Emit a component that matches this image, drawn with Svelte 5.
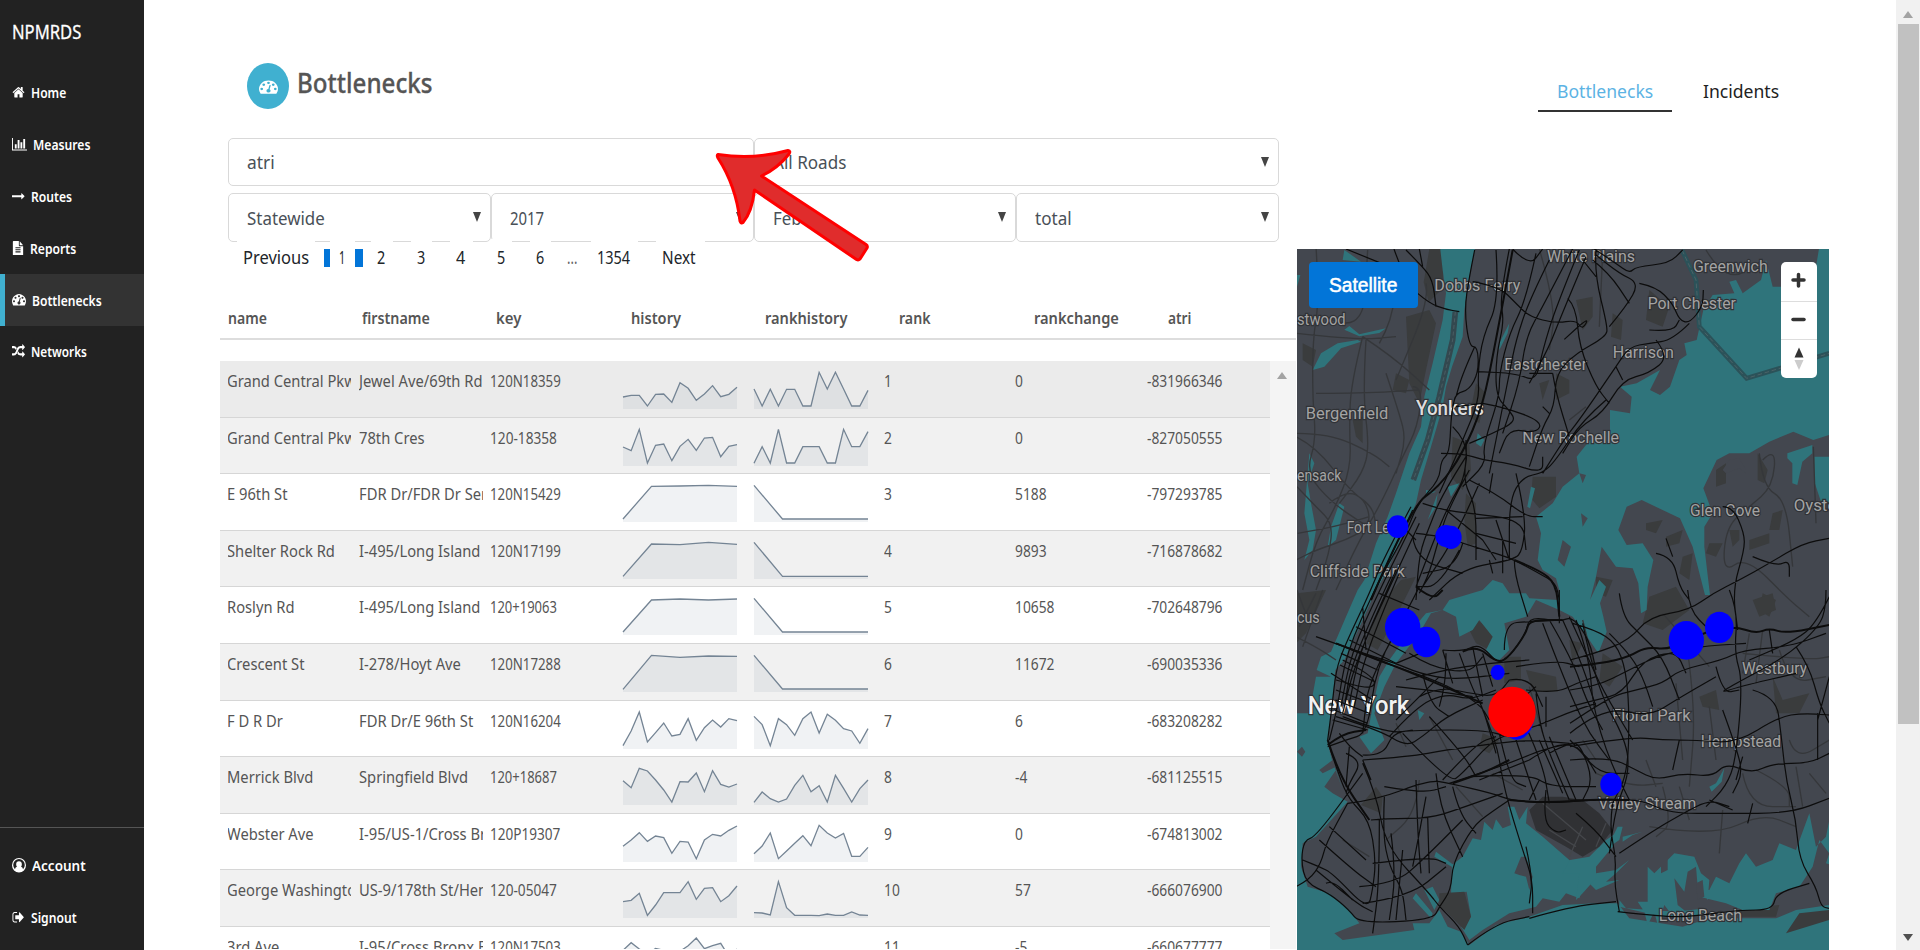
<script>
  const icons = {
    home: 'M1472 992v480q0 26-19 45t-45 19h-384v-384h-256v384h-384q-26 0-45-19t-19-45v-480q0-1 .5-3t.5-3l575-474 575 474q1 2 1 6zm223-69l-62 74q-8 9-21 11h-3q-13 0-21-7l-692-577-692 577q-12 8-24 7-13-2-21-11l-62-74q-8-10-7-23.5t11-21.5l719-599q32-26 76-26t76 26l244 204v-195q0-14 9-23t23-9h192q14 0 23 9t9 23v408l219 182q10 8 11 21.5t-7 23.5z',
    chart: 'M640 896v512h-256v-512h256zm384-512v1024h-256v-1024h256zm1024 1152v128h-2048v-1536h128v1408h1920zm-640-896v768h-256v-768h256zm384-384v1152h-256v-1152h256z',
    arrow: 'M1728 893q0 14-10 24l-384 354q-16 14-35 6-19-9-19-29v-224h-1248q-14 0-23-9t-9-23v-192q0-14 9-23t23-9h1248v-224q0-21 19-29t35 5l384 350q10 10 10 23z',
    file: 'M1596 476q14 14 28 36h-472v-472q22 14 36 28zm-476 164h544v1056q0 40-28 68t-68 28h-1344q-40 0-68-28t-28-68v-1600q0-40 28-68t68-28h800v544q0 40 28 68t68 28zm160 736v-64q0-14-9-23t-23-9h-704q-14 0-23 9t-9 23v64q0 14 9 23t23 9h704q14 0 23-9t9-23zm0-256v-64q0-14-9-23t-23-9h-704q-14 0-23 9t-9 23v64q0 14 9 23t23 9h704q14 0 23-9t9-23zm0-256v-64q0-14-9-23t-23-9h-704q-14 0-23 9t-9 23v64q0 14 9 23t23 9h704q14 0 23-9t9-23z',
    gauge: 'M384 1152q0-53-37.5-90.5t-90.5-37.5-90.5 37.5-37.5 90.5 37.5 90.5 90.5 37.5 90.5-37.5 37.5-90.5zm192-448q0-53-37.5-90.5t-90.5-37.5-90.5 37.5-37.5 90.5 37.5 90.5 90.5 37.5 90.5-37.5 37.5-90.5zm428 481l101-382q6-26-7.5-48.5t-38.5-29.5-48 6.5-30 39.5l-101 382q-60 5-107 43.5t-63 98.5q-20 77 20 146t117 89 146-20 89-117q16-60-6-117t-72-91zm660-33q0-53-37.5-90.5t-90.5-37.5-90.5 37.5-37.5 90.5 37.5 90.5 90.5 37.5 90.5-37.5 37.5-90.5zm-640-640q0-53-37.5-90.5t-90.5-37.5-90.5 37.5-37.5 90.5 37.5 90.5 90.5 37.5 90.5-37.5 37.5-90.5zm448 192q0-53-37.5-90.5t-90.5-37.5-90.5 37.5-37.5 90.5 37.5 90.5 90.5 37.5 90.5-37.5 37.5-90.5zm320 448q0 261-141 483-19 29-54 29h-1402q-35 0-54-29-141-221-141-483 0-182 71-348t191-286 286-191 348-71 348 71 286 191 191 286 71 348z',
    random: 'M666 481q-60 92-137 273-22-45-37-72.5t-40.5-63.5-51-56.5-63-35-81.5-14.5h-224q-14 0-23-9t-9-23v-192q0-14 9-23t23-9h224q250 0 410 225zm1126 799q0 14-9 23l-320 320q-9 9-23 9-13 0-22.5-9.5t-9.5-22.5v-192q-32 0-85 .5t-81 1-73-1-71-5-64-10.5-63-18.5-58-28.5-59-40-55-53.5-56-69.5q59-93 136-273 22 45 37 72.5t40.5 63.5 51 56.5 63 35 81.5 14.5h256v-192q0-14 9-23t23-9q12 0 24 10l319 319q9 9 9 23zm0-896q0 14-9 23l-320 320q-9 9-23 9-13 0-22.5-9.5t-9.5-22.5v-192h-256q-48 0-87 15t-69 45-51 61.5-45 77.5q-32 62-78 171-29 66-49.5 111t-54 105-64 100-74 83-90 68.5-106.5 42-128 16.5h-224q-14 0-23-9t-9-23v-192q0-14 9-23t23-9h224q48 0 87-15t69-45 51-61.5 45-77.5q32-62 78-171 29-66 49.5-111t54-105 64-100 74-83 90-68.5 106.5-42 128-16.5h256v-192q0-14 9-23t23-9q12 0 24 10l319 319q9 9 9 23z',
    user: 'M896 0a896 896 0 1 0 0 1792a896 896 0 1 0 0-1792zM1420 1400q-60-270-260-320q100-110 100-300q0-370-364-370t-364 370q0 190 100 300q-200 50-260 320a740 740 0 1 1 1048 0z',
    signout: 'M704 1440q0 4 1 20t.5 26.5-3 23.5-10 19.5-20.5 6.5h-320q-119 0-203.5-84.5t-84.5-203.5v-704q0-119 84.5-203.5t203.5-84.5h320q13 0 22.5 9.5t9.5 22.5q0 4 1 20t.5 26.5-3 23.5-10 19.5-20.5 6.5h-320q-66 0-113 47t-47 113v704q0 66 47 113t113 47h312l11.5 1 11.5 3 8 5.5 7 9 2 13.5zm928-544q0 26-19 45l-544 544q-19 19-45 19t-45-19-19-45v-288h-448q-26 0-45-19t-19-45v-384q0-26 19-45t45-19h448v-288q0-26 19-45t45-19 45 19l544 544q19 19 19 45z'
  };

  // Scales a label horizontally so that it takes the given width.
  function fit(node, width) {
    node.style.transform = `scaleX(${width / node.offsetWidth})`;
  }

  const nav = [
    { t: 'Home', i: 'home', w: 35, iw: 13 },
    { t: 'Measures', i: 'chart', w: 57, iw: 15, vb: 2048 },
    { t: 'Routes', i: 'arrow', w: 41, iw: 13 },
    { t: 'Reports', i: 'file', w: 46, iw: 12 },
    { t: 'Bottlenecks', i: 'gauge', w: 70, iw: 14 , active: true },
    { t: 'Networks', i: 'random', w: 56, iw: 13 }
  ];
  const foot = [
    { t: 'Account', i: 'user', w: 54, iw: 14 },
    { t: 'Signout', i: 'signout', w: 46, iw: 13 }
  ];

  const pages = [
    ['Previous', 78, 66], ['1', 20, 6], ['2', 22, 8], ['3', 21, 8], ['4', 23, 9],
    ['5', 21, 8], ['6', 21, 8], ['...', 22, 10], ['1354', 47, 33], ['Next', 49, 34]
  ];

  const heads = [
    ['name', 39], ['firstname', 68], ['key', 25], ['history', 50],
    ['rankhistory', 82], ['rank', 32], ['rankchange', 85], ['atri', 23]
  ];

  // Sparkline values are depths below the row's top edge, in thirds of a pixel.
  const drop = (top, low, first) => [first - top, low - top, low - top, low - top, low - top];
  const off = (top, v) => v.map((y) => y - top);
  const rows = [
    { n: 'Grand Central Pkwy', f: 'Jewel Ave/69th Rd', k: '120N18359', r: 1, c: 0, a: -831966346,
      h: off(63, [171,166,166,198,163,162,187,128,145,181,162,137,170,163,142]), g: off(63, [147,198,148,198,148,148,198,198,97,147,97,147,198,198,151]) },
    { n: 'Grand Central Pkwy', f: '78th Cres', k: '120-18358', r: 2, c: 0, a: -827050555,
      h: off(234, [321,332,268,369,316,312,362,319,298,331,294,292,350,319,314]), g: off(234, [370,320,369,268,369,369,320,320,320,369,369,268,320,320,275]) },
    { n: 'E 96th St', f: 'FDR Dr/FDR Dr Service Rd', k: '120N15429', r: 3, c: 5188, a: -797293785,
      h: off(403, [538,440,439,437,440]), g: drop(403, 538, 437) },
    { n: 'Shelter Rock Rd', f: 'I-495/Long Island Expy', k: '120N17199', r: 4, c: 9893, a: -716878682,
      h: off(574, [710,613,615,608,614]), g: drop(574, 710, 608) },
    { n: 'Roslyn Rd', f: 'I-495/Long Island Expy', k: '120+19063', r: 5, c: 10658, a: -702648796,
      h: off(743, [878,782,779,782,779]), g: drop(743, 878, 777) },
    { n: 'Crescent St', f: 'I-278/Hoyt Ave', k: '120N17288', r: 6, c: 11672, a: -690035336,
      h: off(14, [150,48,54,50,51]), g: drop(14, 149, 48) },
    { n: 'F D R Dr', f: 'FDR Dr/E 96th St', k: '120N16204', r: 7, c: 6, a: -683208282,
      h: off(183, [317,273,216,306,278,249,288,283,236,301,263,240,261,236,242]), g: off(183, [229,254,317,236,254,286,236,216,279,223,241,266,273,310,266]) },
    { n: 'Merrick Blvd', f: 'Springfield Blvd', k: '120+18687', r: 8, c: -4, a: -681125515,
      h: off(353, [424,445,387,395,422,452,488,427,428,401,457,394,435,443,434]), g: off(353, [489,458,478,488,479,438,408,457,439,488,408,447,488,448,422]) },
    { n: 'Webster Ave', f: 'I-95/US-1/Cross Bronx', k: '120P19307', r: 9, c: 0, a: -674813002,
      h: off(522, [619,600,578,604,588,593,640,604,606,656,600,583,588,571,558]), g: off(522, [641,618,579,656,633,610,587,617,556,579,594,580,649,649,622]) },
    { n: 'George Washington', f: 'US-9/178th St/Henry', k: '120-05047', r: 10, c: 57, a: -666076900,
      h: off(692, [787,783,762,828,797,760,760,760,727,780,747,745,787,769,740]), g: off(692, [820,821,827,727,805,828,828,828,829,824,828,828,818,827,828]) },
    { n: '3rd Ave', f: 'I-95/Cross Bronx Expy', k: '120N17503', r: 11, c: -5, a: -660677777,
      h: off(862, [932,909,928,945,926,932,950,935,918,895,927,918,911,950,928]), g: off(862, [995,995,995,995,995]) }
  ];
  const line = (v) => v.map((y, i) => `${(i * 114) / (v.length - 1)},${y / 3}`).join(' ');

  // Rounds the corners of polylines written as "Mx yLx y..." by curving through segment midpoints.
  function smooth(d) {
    return d.split('M').filter((s) => s.trim()).map((s) => {
      const n = s.match(/-?[\d.]+/g).map(Number);
      const p = [];
      for (let i = 0; i + 1 < n.length; i += 2) p.push([n[i], n[i + 1]]);
      let out = `M${p[0]}`;
      for (let i = 1; i < p.length - 1; i++) {
        const m = [(p[i][0] + p[i + 1][0]) / 2, (p[i][1] + p[i + 1][1]) / 2];
        out += `Q${p[i]} ${m}`;
      }
      return out + `L${p[p.length - 1]}`;
    }).join('');
  }

  const bronx = 'M294 27L330 130L400 190L450 208L490 215M330 30L380 80L410 120L420 200M370 27L380 80M150 27L330 100M536 30L520 110L505 210L520 320L545 320L548 395L520 450L480 460L470 500L465 540L460 640L435 660L430 720L365 790L330 880L260 1000L225 1080M536 320L500 400L480 470M600 30L610 180L560 290L545 400L550 480L500 600L480 650L430 760M640 27L610 180L625 240L600 350L600 470L640 510L660 545L590 580L520 610M510 600L515 700L460 790L410 910L360 1040M650 27L700 80L740 27M720 40L690 180L640 280L610 400L610 470L560 620L570 670L500 740M760 60L700 180L660 300L640 400L620 500L580 700M830 27L740 200L690 290L670 430L620 580M850 30L780 200L740 330L720 425L660 400L545 395M870 50L790 240L760 320L700 430M860 60L900 110M530 125L610 140L660 190L700 230L780 250L840 240L860 270L880 230L805 298M815 175L840 200L850 320L900 440L940 490M930 480L860 540L780 660L740 700L680 710L640 780L640 960M900 27L895 100L935 260L930 290L840 340L780 400L775 500L740 560L700 680M940 260L990 200L1030 130L970 100L900 45M895 27L960 70L1000 100L1020 80L1120 70L1160 30M890 60L940 100L1000 190M1030 130L1080 140L1130 190L1150 240L1180 250L1220 200L1222 150M1060 270L1130 275L1150 240M1180 250L1130 300L1060 310L1000 320L960 380L850 540L810 590L740 700M1080 300L1120 350L1060 400L980 420L920 520L850 560L800 640M960 380L980 420M560 490L620 500L740 545L720 580L640 565L610 640M480 500L560 490M770 400L780 460L820 590M770 400L700 400M470 560L520 610L500 720L540 800L540 960M435 640L500 640L560 660L640 670L740 700L740 650M520 720L600 760L690 830L740 830M380 790L440 810L520 820L680 840L690 930M510 650L440 760L400 860L370 940L360 1080M520 690L460 800L430 890L400 1000L370 1060M550 730L480 890L380 1040M540 835L680 830M540 880L660 910M660 700L690 830L680 930L655 960L500 985L400 1080M360 880L450 890L500 910L600 940L655 960L730 1000L780 1030L790 1080M500 910L480 980L380 1000M655 960L655 1000L695 1130M560 900L600 960M450 810L560 900M600 840L640 960M580 960L590 1000M620 900L620 1000M330 870L360 900M350 890L360 960L500 1000M490 930L430 1040L360 1040M590 700L580 760M740 500L760 520';
  const manhattan = 'M345 800L260 960L225 1050L145 1220L120 1290L108 1400L95 1500M350 810L240 1040L150 1240L125 1400L100 1500M360 830L250 1050L165 1240L135 1400M370 850L300 1000L180 1260L140 1420M300 990L260 1080L190 1240L160 1390M310 1000L210 1230L175 1400M370 1040L340 1100L240 1280L215 1480L150 1500L95 1520M330 1130L220 1300L200 1480M285 1010L170 1250L145 1400M140 1260L240 1310L230 1350L120 1320M135 1240L245 1290M132 1275L236 1325M120 1350L225 1390M118 1380L220 1420M115 1410L215 1450M110 1440L215 1470M160 1200L300 1270M180 1160L330 1240M105 1300L230 1380M200 1100L210 1230M250 1060L370 1110M130 1480L160 1520L200 1550';
  const queens = 'M120 1210L240 1260L330 1290L440 1330L550 1390L580 1440M60 1190L200 1240L300 1270L370 1300L470 1320L640 1300M440 1230L500 1235L540 1215L570 1230L605 1270L640 1250L690 1180L700 1130L790 1145L830 1130L880 1200L900 1290M300 1270L420 1220M330 1320L440 1290L580 1270L700 1260M370 1370L430 1340L520 1360L600 1370L640 1320M140 1430L270 1480L360 1470L560 1470L640 1490M280 1490L360 1400L450 1360L520 1380L600 1350M120 1430L250 1470L330 1520L380 1490L450 1430L560 1380M200 1545L260 1548L290 1480L350 1470M200 1560L340 1550L450 1530L600 1510L700 1500L820 1510M320 1480L460 1630L500 1600L580 1510L640 1480L720 1460L810 1420L900 1390M460 1630L520 1610L640 1570L760 1520L900 1500M100 1520L130 1610L160 1680L220 1740L240 1860L230 1950L215 2010L110 1900L70 1880L20 1860M155 1690L240 1680L400 1620L460 1630L590 1660L640 1680L740 1690L900 1680M640 1680L580 1720L530 1760L470 1870L465 1950L430 2000L410 2040L190 2050L160 2010L100 1960L30 1930L15 1860L25 1800L60 1790L200 1600M0 1940L40 1920L75 1870L90 1810L155 1690M225 1740L270 1735L400 1735L480 1710L620 1660M70 1800L170 1890L240 1940M100 1760L210 1860M60 1890L180 1990L230 2015M90 1930L110 1920L170 1980M230 1870L400 1850L450 1870M190 1940L300 1930L380 1860L500 1740M200 1990L340 1970L450 1880M265 1670L260 1780L280 1880L320 1950L330 2040M200 1570L240 1660L270 1820L400 1960L430 2000L490 2060L515 2115M250 1740L250 1930L230 2080M285 1780L300 1900L280 2040M320 1830L300 2040M360 1620L365 1780L375 1900M390 1670L370 1780L350 1880M395 1730L400 1900M420 1600L430 1700L500 1850M470 1640L490 1720L540 1780M150 1540L200 1560L160 1630L150 1660M160 1520L150 1640M200 1560L225 1620M265 1640L380 1660L450 1640M400 1430L500 1540L540 1610M440 1230L470 1330M560 1410L600 1500L620 1620L640 1700L680 1830L710 1920L710 2020M450 1240L450 1320L430 1400M490 1240L530 1350L560 1400L600 1540M530 1220L560 1370M560 1240L590 1340M610 1480L640 1620L690 1640M660 1500L720 1680M690 1460L740 1570L760 1690M730 1500L800 1660M760 1490L840 1680M720 1360L730 1450L760 1540L820 1680M750 1370L750 1460M690 1350L780 1360L840 1330L900 1310M625 1230L625 1150L700 1145L800 1140M790 1050L790 1150M740 1150L790 1280L840 1400L880 1480L940 1560M760 1140L830 1260L870 1380L920 1470M800 1140L850 1250L900 1400M820 1130L870 1240L920 1350L1010 1500M640 1320L700 1310L740 1400M830 1150L900 1170L960 1210L990 1290L1000 1420L995 1600L950 1690M660 1280L780 1260L850 1280M440 1620L540 1510L600 1490M430 1310L340 1400L300 1440M520 1610L700 1600L760 1640L900 1640M550 1620L700 1560M760 1540L830 1500L860 1530L890 1620L860 1680M700 1560L760 1520L830 1510L880 1560M730 1620L700 1680M380 1300L400 1390L460 1430M590 1450L720 1340M340 1240L400 1280L520 1300L560 1250M300 1340L400 1350L530 1370';
  const island = 'M822 1260L900 1240L1000 1200L1060 1130L1180 1110L1250 1060L1330 1020L1420 970L1520 910L1600 895M970 1060L980 1130L1030 1180L1100 1250L1150 1380M940 1180L1000 1240L1040 1310L1070 1400M1175 1050L1180 1110L1240 1170M1300 1050L1325 1110L1315 1240L1340 1320L1320 1560L1290 1640L1230 1700M1080 940L1130 950L1150 1040L1180 1080M1110 895L1130 950M1280 800L1310 800L1345 880L1345 930L1310 1050L1325 1170M1370 950L1440 980L1480 960L1480 1010M1590 1050L1590 1100L1570 1160L1470 1250L1320 1330L1270 1360L1330 1340L1500 1300M1600 1070L1560 1150L1500 1200L1360 1260M822 1350L900 1340L1000 1290L1080 1250L1200 1220L1350 1210M822 1400L900 1380L980 1360L1040 1260L1140 1230L1170 1300M822 1450L940 1370L1020 1350L1100 1330L1150 1290L1280 1260L1340 1230L1480 1220L1590 1180M840 1140L880 1250L890 1400L940 1560L1000 1680M860 1150L900 1340L990 1500L1000 1600L960 1700L940 1840M822 1480L920 1400L1060 1430L1140 1380L1260 1310M822 1520L1000 1490L1100 1500L1200 1500L1320 1510L1450 1430L1520 1420L1600 1425M822 1560L940 1550L1020 1590L1080 1620L1160 1600L1250 1610L1290 1570L1370 1600L1430 1570L1540 1570L1600 1540M1150 1500L1130 1590M1280 1410L1320 1520L1340 1600L1310 1660M1340 1550L1320 1620M1370 1350L1440 1370L1455 1480L1470 1620L1500 1740L1510 1860L1560 1940L1575 2000L1600 2005M1500 1220L1540 1280L1570 1390L1600 1450M1600 1310L1565 1440M1565 1420L1565 1560M822 1680L950 1680L1040 1680L1120 1720L1290 1720L1480 1720L1600 1675M970 1840L1060 1780L1160 1720L1240 1680L1300 1700M950 1690L940 1760L960 1850L955 1930L970 2015M700 2035L822 2000L960 1985M515 2115L600 2050L700 2030M965 2015L1100 2030L1180 2030L1330 2010L1430 2010L1440 1960L1540 1930M1240 1680L1310 1710M1370 1690L1355 1750M1420 1170L1430 1240M840 1720L900 1770L960 1850M690 1820L710 1910L700 1990M860 1540L900 1600L1000 1600M822 1500L870 1550L900 1600M750 1650L740 1740L780 1780L810 1770M1260 1280L1280 1360L1330 1350';
  const trunk = 'M822 1280L920 1270L1000 1250L1050 1220L1120 1230L1240 1170L1320 1160L1380 1180L1420 1165L1470 1180L1600 1155M500 1235L540 1215L605 1270L640 1250L690 1180L700 1140L800 1140M640 1680L740 1690L900 1678L1000 1680M655 960L730 990L780 1030L790 1130M225 1080L345 800L430 740L500 640L560 500L600 300L650 30M120 1210L330 1290L560 1390M95 1500L130 1610L220 1740M95 1515L140 1480L210 1470M470 1630L560 1600L640 1560M360 1040L410 1080L440 1050';
  const minor = 'M60 20L70 180L50 300L50 480L60 600L30 700L110 790L200 850M90 230L200 290L215 30M200 290L165 430L160 560L165 680L120 800L60 900L20 1050M200 290L290 350L400 450M210 300L200 460L220 620L200 700L130 790M250 310L290 240L300 100M0 280L180 300L300 290M0 580L100 580L230 640L280 680M0 590L60 620L160 750L230 800L240 860M3 740L60 800L110 850L100 940L60 1050M60 460L200 460L370 450M270 400L310 520L330 600L300 700M350 440L380 440L365 560L320 650L250 800L190 900L120 1050M100 790L150 750L210 780L225 860L150 900L60 930L0 960M390 130L400 180L300 420M5 880L120 860L220 830M0 1190L60 1220L120 1260M3 1050L40 1150M60 1060L10 1160M80 1050L20 1220M730 27L780 200L760 330M920 40L910 260M870 500L820 540M1230 30L1290 130L1400 60M1400 660L1440 620L1430 740L1360 800L1290 860L1280 1000L1350 950L1480 1080L1540 1130M1552 620L1560 850M1390 640L1400 740L1470 780L1490 980M1170 1200L1200 1400L1180 1640M1240 1400L1260 1560M1100 1120L1240 1280M900 1600L1000 1640L1100 1630M1340 1600L1360 1700L1500 1700M1380 1590L1480 1640L1480 1700M1500 1580L1520 1700M1060 1760L1250 1790L1400 1720L1500 1760M1100 1640L1130 1750L1080 1790M1150 1640L1180 1740M1280 1710L1270 1840M1540 1600L1590 1660M1050 1560L1080 1640M1340 1240L1540 1260L1600 1250M1360 1180L1340 1300M1400 1170L1380 1330M1450 1230L1480 1330L1590 1310M1480 1500L1500 1560L1600 1500M860 1500L900 1560M1140 1330L1160 1560M370 1620L360 1720L270 1800M480 1640L560 1730M400 1430L470 1560M300 1450L330 1520M140 1800L220 1850M590 1600L680 1650M700 1340L740 1480M860 1140L900 1300';

  const places = [
    ['Dobbs Ferry', 415, 152, 258], ['stwood', 3, 256, 146], ['Bergenfield', 29, 538, 248], ['ensack', 3, 724, 133],
    ['Fort Lee', 152, 878, 150], ['Cliffside Park', 41, 1010, 286], ['Eastchester', 625, 389, 248], ['New Rochelle', 679, 610, 290],
    ['White Plains', 753, 65, 264], ['Greenwich', 1191, 97, 224], ['Port Chester', 1055, 207, 265], ['Harrison', 950, 354, 184],
    ['Glen Cove', 1182, 828, 210], ['Oyster Bay', 1493, 812, 240], ['cus', 3, 1150, 68], ['Westbury', 1338, 1302, 195],
    ['Floral Park', 948, 1443, 236], ['Hempstead', 1214, 1522, 241], ['Valley Stream', 907, 1706, 294], ['Long Beach', 1088, 2042, 250]
  ];

  const dots = [
    [305, 860, 32, 34], [450, 888, 32, 33], [465, 892, 32, 35], [320, 1162, 53, 58], [391, 1206, 42, 46],
    [605, 1297, 21, 23], [662, 1424, 53, 75], [1171, 1201, 53, 58], [1270, 1162, 43, 47], [945, 1633, 32, 35]
  ];
</script>

<div class="page">
  <aside>
    <h1><span class="t" use:fit={69}>NPMRDS</span></h1>
    <nav>
      {#each nav as n}
        <a class:active={n.active} href="#top">
          <svg style:width="{n.iw}px" viewBox="0 0 {n.vb ?? 1792} 1792" preserveAspectRatio="none"><path d={icons[n.i]} /></svg>
          <span class="t" use:fit={n.w}>{n.t}</span>
        </a>
      {/each}
    </nav>
    <nav class="foot">
      {#each foot as n}
        <a href="#top">
          <svg style:width="{n.iw}px" viewBox="0 0 1792 1792" preserveAspectRatio="none"><path fill-rule="evenodd" d={icons[n.i]} /></svg>
          <span class="t" use:fit={n.w}>{n.t}</span>
        </a>
      {/each}
    </nav>
  </aside>

  <main>
    <header>
      <span class="badge"><svg viewBox="0 0 1792 1792" preserveAspectRatio="none"><path d={icons.gauge} /></svg></span>
      <h2><span class="t" use:fit={136}>Bottlenecks</span></h2>
      <div class="tabs">
        <a class="on" href="#top"><span class="t" use:fit={96}>Bottlenecks</span></a>
        <a href="#top"><span class="t" use:fit={76}>Incidents</span></a>
      </div>
    </header>

    <div class="content">
      <section class="left">
        <div class="filters two">
          <div class="select"><span class="t" use:fit={28}>atri</span></div>
          <div class="select"><span class="t" use:fit={73}>All Roads</span><i></i></div>
        </div>
        <div class="filters four">
          <div class="select"><span class="t" use:fit={78}>Statewide</span><i></i></div>
          <div class="select"><span class="t" use:fit={34}>2017</span><i></i></div>
          <div class="select"><span class="t" use:fit={29}>Feb</span><i></i></div>
          <div class="select"><span class="t" use:fit={37}>total</span><i></i></div>
        </div>
        <div class="pager">
          {#each pages as [label, box, w]}
            <span class="pg" class:cur={label === '1'} class:dots={label === '...'}>
              <span class="box" style:width="{box}px"><span class="t" use:fit={w}>{label}</span></span>
            </span>
          {/each}
        </div>

        <div class="thead">
          {#each heads as [h, w]}<div><span class="t" use:fit={w}>{h}</span></div>{/each}
        </div>

        <div class="scroll">
          <div class="rows">
            {#each rows as r}
              <div class="row">
                <div class="c name"><span class="t">{r.n}</span></div>
                <div class="c name"><span class="t">{r.f}</span></div>
                <div class="c"><span class="t" use:fit={r.k.includes('P') ? 70 : r.k.includes('N') ? 71 : 67}>{r.k}</span></div>
                {#each [r.h, r.g] as v}
                  <div class="c"><svg class="spark" viewBox="0 0 114 56">
                    <polygon points="0,48 {line(v)} 114,48" />
                    <polyline points={line(v)} />
                  </svg></div>
                {/each}
                <div class="c"><span class="t">{r.r}</span></div>
                <div class="c"><span class="t">{r.c}</span></div>
                <div class="c"><span class="t">{r.a}</span></div>
              </div>
            {/each}
          </div>
          <div class="track"><b></b></div>
        </div>
      </section>

      <section class="map">
        <svg class="canvas" viewBox="3 27 1596 2103" preserveAspectRatio="none">
          <rect x="0" y="0" width="1700" height="2200" fill="#43474f" />

          <g class="park">
            <path d="M400 27h35l8 60-5 60-40 40-15-60zM330 230l70-20 20 40-30 140-20 100-30-60z M470 590l50 20 5 80-25 60-35-40zM510 760l30 30 0 120-25 10-10-80z M540 430l30 30-20 90-30-20z M840 180l50-10 0 60-30 40zM1060 150l60 50-20 60-50-20z M950 220l30 20-5 60-30-10z M710 710l70 0 0 60-50 35-25-30z M780 400l40 20 0 40-40 20z M730 430l30-10-20 60z M20 310l40 20-10 50-30-20z M170 540l30-10 0 80-20-20z M300 400l40 20-10 40-40-10z" />
            <path d="M255 1090l60-70 45-10-55 110-60 110-35-20z M0 1060l90-10-60 130-30 30z M240 1640l20 30-5 50-60-25z M625 1250l50 0 0 70-50 10z M690 1290l90 20 5 45-75 0z M560 1480l50 20-30 40-30-15z M1060 1070l80-30 40 70-80 60-60-20z M1430 1310l30 70 80-20-30 60-70 0z M1400 1060l40 20-20 50-30-20z M920 1240l60 40-40 60-30-20z M1260 690l30-20 0 60-30 10z M1385 640l30 50-10 40-20-10z M1050 850l50-10-20 40-30-10zM1110 890l50-20-10 40-40 10z M1160 950l30-10-10 80-30-20z M1430 820l30-10-10 60-30 0z M1300 870l30 0 0 30-20 20z M1360 900l60-20 0 30-60 20z M1240 910l40 0-20 40-30-10z M900 1010l50 10-20 50-30-10z M820 1200l40 10-30 60z M1210 1370l50-20 10 60-50-10z M1330 2005l120-10-10 35-110 0z" />
            <path d="M520 1170l25-30 50 40-15 50-40-20z M1370 1080l60-20 10 50-50 20z" />
          </g>

          <g class="bay">
            <path d="M432 20H538L520 110L505 210L500 290L468 380L450 440L440 500L405 620L375 720L360 790L330 860L300 930L270 1000L240 1050L200 1140L145 1260L118 1290L108 1400L95 1510L108 1560L140 1650L120 1590L85 1640L110 1660L155 1685L60 1790L20 1810L15 1880L35 1940L100 1960L160 2010L190 2050L115 2080L140 2100L355 2070L350 2050L400 2050L430 2010L455 2060L495 2075L520 2115L600 2055L700 2030L800 1995L900 1990L965 1990L1000 2035L1160 2060L1240 2035L1440 2035L1500 2010L1600 1995V2140H0V1420L40 1420L60 1310L105 1310L62 1290L75 1250L105 1235L150 1130L185 1050L205 1020L240 910L275 830L300 760L340 640L375 560L385 470L410 370L440 240L450 160L440 90Z" />
            <path d="M1600 20L1570 20L1560 80L1520 120L1470 140L1430 140L1410 60L1395 120L1340 160L1320 120L1300 125L1315 160L1250 165L1222 210L1202 300L1165 310L1172 345L1150 360L1122 440L1092 465L1062 450L1092 390L1022 430L972 440L1007 470L1002 520L942 510L942 570L882 600L842 650L850 700L800 740L770 790L720 830L735 880L725 960L740 990L780 1015L790 1050L785 1080L700 1075L690 1060L640 1060L620 1030L590 1020L560 1050L510 1065L460 1080L440 1110L390 1120L330 1190L280 1260L250 1310L230 1400L215 1480L190 1490L225 1540L265 1500L235 1420L265 1340L300 1270L370 1180L405 1120L440 1110L480 1130L490 1190L530 1170L550 1140L590 1190L570 1230L605 1265L640 1230L625 1150L690 1130L720 1080L790 1110L830 1130L860 1170L907 1240L932 1175L922 1130L912 1090L930 1040L910 1020L882 1080L900 1010L917 920L960 980L1010 985L1027 1030L1035 1120L1052 1110L1055 1040L1072 960L1040 910L992 915L967 870L992 800L1037 780L1152 835L1190 920L1227 1065L1242 1065L1225 920L1225 860L1250 820L1222 745L1262 660L1300 640L1360 640L1420 605L1492 575L1552 600L1600 585Z" />
            <path d="M1474 640l75-25 0 25-30 25-15 70-15-5 0-60-15-15zM1555 650l50 0 0 140-30-5-20-60zM705 740l12 5-15 60-8-5z" />
            <!-- Jamaica Bay -->
            <path d="M468 1875L500 1850L530 1795L555 1800L565 1745L590 1770L600 1738L620 1765L645 1755L635 1700L655 1700L670 1740L695 1700L690 1750L740 1790L820 1860L900 1900L960 1890L1000 1860L960 1900L930 1925L970 1920L900 1950L870 1920L850 1975L810 1960L790 1985L740 1975L720 2000L640 2020L560 2070L520 2100L495 2060L525 2030L512 1955L465 1962Z" />
            <path d="M822 1860L880 1850L930 1800L960 1780L950 1820L900 1880L900 1915L860 1960L840 1980L850 1900L800 1900ZM385 1950L410 1940L430 1980L415 2010Z" />
            <path d="M1055 1880l20 20 40-40 20-20 60 10 20 50 25 20-5 60-30-40-5-60-25 15-10 60-30-40 10 80 50 40-60 0-30-40-20 60-10-40-20 40-10-40-20-30 30 0z M1240 1950l20-40 40 20 30-60 20-30 30 40 50-20 20-50 50 20 40-110 20 100 30-30 20-100 40 60 0 140-60-20 10-30-30-40-20 80-40 60-70 20-20 50-80 0-50-20-80-20 0-20 40 0z M970 1980l20 25 150 10 90-10-10 20-120 5-130-30zM945 1800l20-40 15 0-10 40-30 20zM980 1790l60-15-30 10-30 20z" />
            <path d="M50 390l25-50 50-30 60-10 10 5-60 20-50 55zM160 258l30 25 80-18-20 14-60 10-45-20zM145 30l50 35-55-5zM3 105l10 0-10 35z M40 640l15 30-20 60 10 60 15 80-10 60-25 30 15-60-15-80z M130 790l15 10-25 100-25 20 10-60z M455 740l35-10-25 40zM390 750l30 5-30 10zM410 800l15-40-5 40-25 40z M545 580l20 20-10 20-15-10zM610 310l30-60-5 30-25 50z" />
            <path d="M1240 1640l20-10 25-45-8 40-30 30zM365 1410l20 10-15 20zM420 1835l60 45-5 5-60-35zM360 1960l50 60-5 15-55-60z" />
          </g>

          <g class="land">
            <path d="M3 1535l15-15 10 15-10 15zM70 1590l40-30 10 20-40 20zM855 820l20 15-15 25zM800 900l25 20-20 60-20-20zM850 700l20 5-10 25zM1280 690l20-30 30-5 20 35 0 10-20-15-40 15zM655 1900l20-50 15 0 20 60-10 40-10-40-20-5zM1095 1860l20 0 0 30-20 10zM1200 1930l20-10 5 50-20 10z" />
            <path d="M1470 2080l40-60 90-10v30zM430 1960l75-5 20 75-20 40-50-50-25-20z" fill="#3a3c3d" />
          </g>
          <path d="M700 1710l40-40 60 0 60 10 50 40 40 50-40 50-50 30-50-30-90-50z" fill="#303134" />
          <path d="M740 1690l130 110M760 1770l80 50M820 1850l40-90M900 1820l30-70" class="run" />

          <path d="M478 215L470 300L430 470L395 600L352 720" fill="none" stroke="#33484f" stroke-width="17" />
          <path d="M478 215L470 300L430 470L395 600L352 720" fill="none" stroke="#56666c" stroke-width="2" stroke-dasharray="12 8" />
          <path d="M1158 30L1200 120L1210 260L1352 415L1600 340" class="ferry" />
          <path d="M1158 30L1200 120L1210 260L1352 415L1600 340" class="ferry in" />

          <path class="minor" d={smooth(minor)} />

          <g class="labels">
            {#each places as [name, x, y, w]}
              <text {x} {y} textLength={w} lengthAdjust="spacingAndGlyphs">{name}</text>
            {/each}
            <text class="city" x="360" y="524" textLength="204" lengthAdjust="spacingAndGlyphs">Yonkers</text>
            <text class="metro" x="35" y="1422" textLength="305" lengthAdjust="spacingAndGlyphs">New York</text>
          </g>

          <g class="road">
            {#each [bronx, manhattan, queens, island] as d}<path d={smooth(d)} />{/each}
            <path class="heavy" d={smooth(trunk)} />
          </g>

          {#each dots as [x, y, rx, ry]}<ellipse cx={x} cy={y} {rx} {ry} fill="#00f" />{/each}
          <ellipse cx="648" cy="1416" rx="71" ry="76" fill="red" />
        </svg>
        <button class="sat"><span class="t" use:fit={68}>Satellite</span></button>
        <div class="zoom">
          <div><svg viewBox="0 0 36 38"><path d="M12 18h11M17.500 12.500v11.500" /></svg></div>
          <div><svg viewBox="0 0 36 38"><path d="M12 17.500h11" /></svg></div>
          <div><svg viewBox="0 0 36 38"><path class="n" d="M13.500 17.500L18 7.500L22.500 17.500Z" /><path class="s" d="M13.500 20L18 30L22.500 20Z" /></svg></div>
        </div>
      </section>
    </div>
  </main>

  <div class="bar"><b class="up"></b><div class="thumb"></div><b class="down"></b></div>

  <svg class="pointer" viewBox="710 145 165 125">
    <path d="M718 154.500Q754 160 788 150.500Q791 151 789 154Q778 168 761.500 176L866 244.500Q868 246 867 248L860 259Q858.500 260.500 856.500 259.500L754.500 190Q752 212 743 222.500Q741 224 740 221Q736 186 718 158Q716.500 155 718 154.500Z" />
  </svg>
</div>

<style>
  :global(body) { margin: 0; overflow: hidden; background: #fff; }
  * { box-sizing: border-box; }
  .page { position: relative; display: flex; width: 1920px; height: 950px; overflow: hidden; font-family: 'Noto Sans', sans-serif; color: #555; }
  .t { display: inline-block; white-space: nowrap; transform-origin: 0 50%; }
  a { text-decoration: none; color: inherit; }

  aside { width: 144px; flex: none; background: #222; color: #fff; display: flex; flex-direction: column; }
  h1 { margin: 0; padding-left: 12px; height: 67px; line-height: 63px; font-size: 19.500px; font-weight: 400; -webkit-text-stroke: 0.300px #fff; }
  nav { display: flex; flex-direction: column; }
  nav a { display: flex; align-items: center; gap: 6px; height: 51.800px; padding-left: 12px; padding-bottom: 1px; font-size: 14.500px; font-weight: 600; }
  nav a.active { background: #333; border-left: 5px solid #40b0d0; padding-left: 7px; }
  nav svg { height: 14.500px; flex: none; fill: #fff; }
  nav.foot { margin-top: auto; padding: 12px 0 6px; height: 123px; border-top: 1px solid #555; }

  main { flex: none; width: 1752px; padding: 63px 0 0 76px; }
  header { display: flex; height: 75px; padding-left: 27px; }
  .badge { width: 42px; height: 46px; border-radius: 50%; background: #40b0d0; display: flex; justify-content: center; padding-top: 15px; }
  .badge svg { width: 19px; height: 17px; fill: #fff; }
  h2 { margin: 0 0 0 8px; width: 1241px; font-size: 27px; line-height: 40px; font-weight: 500; -webkit-text-stroke: 0.300px #555; }
  .tabs { display: flex; gap: 12px; font-size: 18.500px; line-height: 28px; color: #222; padding-top: 14px; }
  .tabs a { width: 134px; height: 35px; padding-left: 19px; }
  .tabs .on { color: #5cb3e4; border-bottom: 2px solid #333; }

  .content { display: flex; }
  .left { width: 1077px; flex: none; }
  .filters { display: grid; width: 1051px; margin-left: 8px; font-size: 18px; color: #495057; }
  .two { grid-template-columns: 1fr 1fr; height: 48px; }
  .four { grid-template-columns: repeat(4, 1fr); height: 49px; margin-top: 7px; }
  .select { display: flex; align-items: center; justify-content: space-between; border: 1.500px solid #d9d9d9; border-radius: 5px; background: #fff; padding: 0 9px 0 18px; }
  .select i { border: solid transparent; border-width: 10px 4.500px 0; border-top-color: #444; margin-bottom: 1px; }
  .pager { display: flex; position: relative; margin: -3px 0 0 17px; height: 34px; font-size: 18px; color: #212529; }
  .pg { display: flex; align-items: center; margin-right: 18px; }
  .box { display: block; background: #fff; height: 34px; line-height: 36px; padding-left: 6px; }
  .cur { background: linear-gradient(#0275d8, #0275d8) 0 10px / 100% 18px no-repeat; padding: 0 8px 0 6px; margin: 0 8px 0 -9px; }
  .cur .box { width: 25px !important; padding-left: 9px; }
  .dots { color: #666; margin: 0 2px 0 -2px; }
  .dots .box { background: none; padding-left: 0; }

  .thead { display: flex; width: 1076px; height: 67px; padding: 30px 0 0 7.500px; border-bottom: 2px solid #ddd; font-size: 15.500px; font-weight: 600; line-height: 30px; }
  .thead div { width: 134.400px; flex: none; }
  .scroll { display: flex; height: 588px; margin-top: 21px; overflow: hidden; }
  .rows { width: 1050px; }
  .row { display: flex; height: 56.600px; border-bottom: 1.500px solid #d6d6d6; font-size: 15.500px; line-height: 22px; }
  .row:nth-child(even) { background: #f1f1f1; }
  .row:first-child { background: #ebebeb; }
  .c { width: 123.500px; flex: none; margin-left: 7.750px; overflow: hidden; padding-top: 9px; }
  .c .t { transform: scaleX(0.89); }
  .c.name .t { transform: scaleX(0.95); margin-left: -0.500px; }
  .c:has(.spark) { padding: 0; }
  .spark { display: block; width: 114px; height: 56px; margin-left: 1.500px; overflow: visible; }
  .spark polygon { fill: slategray; opacity: 0.1; }
  .spark polyline { fill: none; stroke: #748494; stroke-width: 1.300; }
  .track { width: 26px; background: #f4f4f4; display: flex; justify-content: center; padding: 11px 2px 0 0; }
  .track b { height: 7px; border: solid transparent; border-width: 0 5.500px 7px; border-bottom-color: #a3a3a3; }

  .map { position: relative; width: 532px; height: 701px; margin-top: 111px; overflow: hidden; }
  .canvas { display: block; width: 532px; height: 701px; }
  .park { fill: #3a3c3d; }
  .bay { fill: #2f747b; }
  .land { fill: #43474f; }
  .run { fill: none; stroke: #44464a; stroke-width: 4; }
  .ferry { fill: none; stroke: #2b5259; stroke-width: 14; }
  .ferry.in { stroke: #4c6267; stroke-width: 3; stroke-dasharray: 14 8; }
  .minor { fill: none; stroke: #35373a; stroke-width: 4; }
  .road { fill: none; stroke: #0c0c0c; stroke-width: 3.600; stroke-linejoin: round; }
  .heavy { stroke-width: 6; }
  .labels { font-family: Roboto, sans-serif; font-size: 50px; fill: #a3a3a3; stroke: #303236; stroke-width: 7; paint-order: stroke; }
  .city { fill: #ddd; font-size: 60px; font-weight: 500; }
  .metro { fill: #f2f2f2; font-size: 79px; font-weight: 500; }
  .sat { position: absolute; left: 12px; top: 13px; width: 109px; height: 46px; padding: 0 0 0 20px; border: 0; border-radius: 4px; background: #0275d8; color: #fff; font: 19.500px 'Liberation Sans', sans-serif; text-align: left; -webkit-text-stroke: 0.500px #fff; }
  .zoom { position: absolute; right: 12px; top: 13px; width: 36px; height: 116px; border-radius: 5px; background: #fff; display: grid; grid-template-rows: repeat(3, 38.700px); }
  .zoom div + div { border-top: 1px solid #ddd; }
  .zoom svg { display: block; width: 36px; height: 38px; fill: none; stroke: #333; stroke-width: 3.500; stroke-linecap: round; }
  .zoom .n { fill: #333; stroke: none; }
  .zoom .s { fill: #ccc; stroke: none; }

  .bar { width: 24px; height: 950px; background: #f1f1f1; display: flex; flex-direction: column; align-items: center; }
  .bar b { border: solid transparent; border-width: 0 5.500px 7px; margin: 11px 0 6px; }
  .bar .up { border-bottom-color: #a3a3a3; }
  .bar .thumb { width: 21px; height: 700px; background: #c1c1c1; }
  .bar .down { border-width: 7px 5.500px 0; border-top-color: #505050; margin: auto 0 9px; }

  .pointer { position: absolute; left: 710px; top: 145px; width: 165px; height: 125px; }
  .pointer path { fill: #e02c2c; stroke: #f00; stroke-width: 3; stroke-linejoin: round; }
</style>
